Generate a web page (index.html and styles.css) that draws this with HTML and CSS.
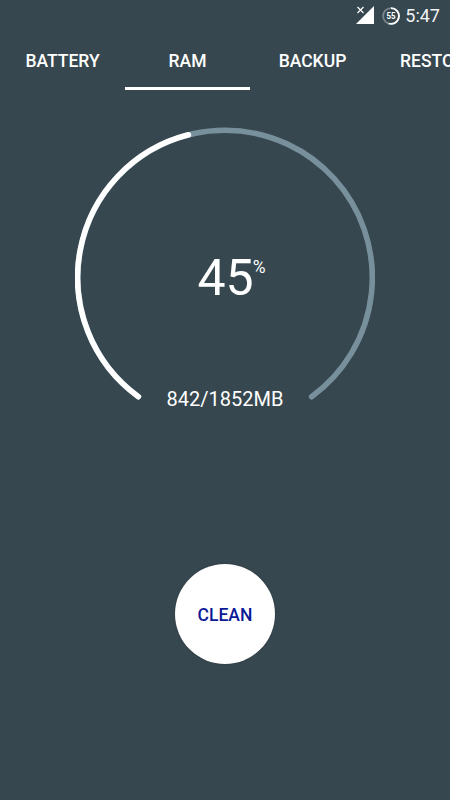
FILE: index.html
```
<!DOCTYPE html>
<html lang="en">
<head>
    <title>RAM</title>
    <meta name="viewport" content="width=device-width, initial-scale=1" charset="UTF-8">
    <link rel="stylesheet" href="styles.css">
</head>
<body>
    <div class="status_bar">
        <svg class="signal" width="18" height="19" viewBox="0 0 18 19">
            <path d="M18 1V19H0Z" fill="#fff"/>
            <path d="M0 0H9V8L7 10H0Z" fill="#37474f"/>
            <path d="M1.5 2L7.5 8M7.5 2L1.5 8" stroke="#fff" stroke-width="1.2"/>
        </svg>
        <svg class="battery" width="18" height="18" viewBox="0 0 18 18">
            <circle cx="9" cy="9" r="7.9" fill="none" stroke="#7b868b" stroke-width="1.8"/>
            <path d="M9 1.1A7.9 7.9 0 1 1 6.6 16.5" fill="none" stroke="#fff" stroke-width="1.8"/>
            <text x="9" y="12.1" text-anchor="middle" textLength="9" lengthAdjust="spacingAndGlyphs">55</text>
        </svg>
        <span class="clock">5:47</span>
    </div>

    <div class="tabs">
        <div class="tab">BATTERY</div>
        <div class="tab active">RAM</div>
        <div class="tab">BACKUP</div>
        <div class="tab last">RESTORE</div>
    </div>

    <div class="gauge">
        <svg class="arc" width="300" height="300" viewBox="0 -0.5 300 300">
            <path class="track" d="M63.4 269.2A147.3 147.3 0 1 1 236.6 269.2"/>
            <path class="progress" d="M63.4 269.2A147.3 147.3 0 0 1 113.4 7.3"/>
        </svg>
        <div class="percent">45<span class="sign">%</span></div>
        <div class="usage">842/1852MB</div>
    </div>

    <button class="clean">CLEAN</button>
</body>
</html>
```
FILE: styles.css
```
body {
    margin: 0;
    height: 800px;
    overflow: hidden;
    font-family: Roboto, sans-serif;
    background-color: #37474f;
    color: #fff;
    display: flex;
    flex-direction: column;
    align-items: center;
}

.status_bar {
    box-sizing: border-box;
    width: 100%;
    height: 31px;
    padding-right: 10px;
    display: flex;
    justify-content: flex-end;
    align-items: center;
}

.signal {
    margin-right: 8px;
    margin-bottom: 2px;
}

.battery {
    margin-right: 5px;
}

.battery text {
    font-size: 9px;
    font-weight: bold;
    fill: #fff;
}

.clock {
    font-size: 18px;
    line-height: 31px;
    color: #f0f2f3;
}

.tabs {
    width: 100%;
    height: 59px;
    display: flex;
    overflow: hidden;
}

.tab {
    box-sizing: border-box;
    flex: 0 0 125px;
    height: 59px;
    font-size: 17.5px;
    font-weight: 500;
    line-height: 61px;
    text-align: center;
}

.tab.active {
    border-bottom: 3px solid #fff;
}

.gauge {
    display: grid;
    width: 300px;
    height: 300px;
    margin-top: 37px;
}

.arc, .percent, .usage {
    grid-area: 1 / 1;
}

.arc path {
    fill: none;
    stroke-width: 5.6;
    stroke-linecap: round;
}

.arc .track {
    stroke: #78909c;
}

.arc .progress {
    stroke: #fff;
}

.percent {
    display: flex;
    justify-content: center;
    align-items: flex-start;
    padding-top: 121px;
    padding-left: 13px;
    font-size: 50px;
    line-height: 60px;
}

.sign {
    margin-left: -1px;
    font-size: 17.5px;
    line-height: 38px;
}

.usage {
    align-self: end;
    text-align: center;
    font-size: 20px;
    line-height: 24px;
    padding-bottom: 16px;
}

.clean {
    width: 100px;
    height: 100px;
    margin-top: 137px;
    padding: 1px 0 0;
    border: none;
    border-radius: 50%;
    background-color: #fff;
    color: #0a1a96;
    font-family: inherit;
    font-size: 17.5px;
    font-weight: 500;
    box-shadow: 0 0 2px rgba(0, 0, 0, 0.3);
}
```
